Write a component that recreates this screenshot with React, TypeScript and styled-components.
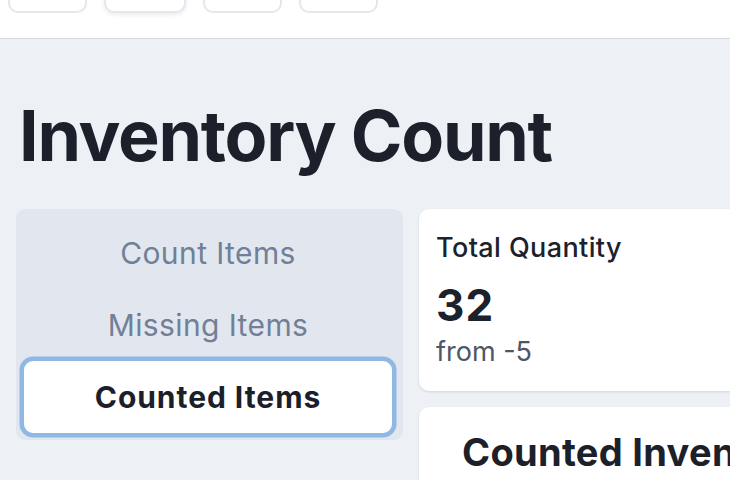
import React from "react";
import styled, { createGlobalStyle } from "styled-components";

const GlobalStyle = createGlobalStyle`
  html, body {
    margin: 0;
    padding: 0;
    background: #edf1f6;
    font-family: Inter, "Noto Sans", sans-serif;
    color: #1a202c;
    overflow: hidden;
    width: 730px;
    height: 480px;
  }
  * { box-sizing: border-box; }
`;

const Header = styled.header`
  height: 39px;
  background: #ffffff;
  border-bottom: 1.5px solid #d8dbe0;
  display: flex;
  align-items: flex-end;
  gap: 17px;
  padding: 0 0 25px 8px;
  overflow: hidden;
`;

const NavButton = styled.button<{ $w: number; $raised?: boolean }>`
  flex: none;
  width: ${(p) => p.$w}px;
  height: 40px;
  background: #ffffff;
  border: 2px solid #e3e7ee;
  border-radius: 10px;
  box-shadow: ${(p) => (p.$raised ? "0 2px 4px rgba(20, 30, 60, 0.08)" : "none")};
`;

const Main = styled.main`
  padding: 62px 16px 0 16px;
`;

const Title = styled.h1`
  margin: 0 0 38px 3px;
  font-size: 70px;
  line-height: 70px;
  font-weight: 700;
  letter-spacing: -1.25px;
  color: #1b202b;
  white-space: nowrap;
`;

const Grid = styled.div`
  display: grid;
  grid-template-columns: 387px 400px;
  gap: 16px;
  align-items: start;
`;

const TabList = styled.div`
  background: #e2e7ef;
  border-radius: 9px;
  padding: 8px 11px 7px 8px;
  display: flex;
  flex-direction: column;
`;

const Tab = styled.button<{ $active?: boolean }>`
  height: 72px;
  border: none;
  border-radius: 9px;
  background: ${(p) => (p.$active ? "#ffffff" : "transparent")};
  box-shadow: ${(p) => (p.$active ? "0 0 0 4.5px #8fb8e4" : "none")};
  font-family: Inter, "Noto Sans", sans-serif;
  font-size: 30px;
  font-weight: ${(p) => (p.$active ? 700 : 400)};
  letter-spacing: ${(p) => (p.$active ? "0.95px" : "0.4px")};
  color: ${(p) => (p.$active ? "#1a1f2b" : "#718096")};
  text-align: center;
  padding: 0;
`;

const Column = styled.div`
  display: flex;
  flex-direction: column;
  gap: 16px;
`;

const Card = styled.div`
  background: #ffffff;
  border-radius: 10px;
  box-shadow: 0 1px 3px rgba(20, 30, 60, 0.08), 0 1px 2px rgba(20, 30, 60, 0.05);
`;

const StatCard = styled(Card)`
  padding: 21px 17px 22px 17px;
`;

const StatLabel = styled.div`
  font-size: 27px;
  line-height: 36px;
  font-weight: 450;
  letter-spacing: 0.4px;
  color: #1c212c;
`;

const StatNumber = styled.div`
  margin-top: 9px;
  font-size: 44px;
  line-height: 60px;
  font-weight: 700;
  letter-spacing: 1px;
  color: #1c212c;
`;

const StatHelp = styled.div`
  margin-top: 0;
  font-size: 27px;
  line-height: 34px;
  color: #4f5664;
`;

const TableCard = styled(Card)`
  padding: 22px 40px 30px 43px;
`;

const TableTitle = styled.h2`
  margin: 0;
  font-size: 38px;
  line-height: 46px;
  font-weight: 700;
  letter-spacing: 0.3px;
  color: #1b202b;
  white-space: nowrap;
`;

export default function App() {
  return (
    <>
      <GlobalStyle />
      <Header>
        <NavButton $w={79} aria-label="nav 1" />
        <NavButton $w={82} $raised aria-label="nav 2" />
        <NavButton $w={79} aria-label="nav 3" />
        <NavButton $w={79} aria-label="nav 4" />
      </Header>
      <Main>
        <Title>Inventory Count</Title>
        <Grid>
          <TabList>
            <Tab>Count Items</Tab>
            <Tab>Missing Items</Tab>
            <Tab $active>Counted Items</Tab>
          </TabList>
          <Column>
            <StatCard>
              <StatLabel>Total Quantity</StatLabel>
              <StatNumber>32</StatNumber>
              <StatHelp>from -5</StatHelp>
            </StatCard>
            <TableCard>
              <TableTitle>Counted Inventory</TableTitle>
            </TableCard>
          </Column>
        </Grid>
      </Main>
    </>
  );
}
